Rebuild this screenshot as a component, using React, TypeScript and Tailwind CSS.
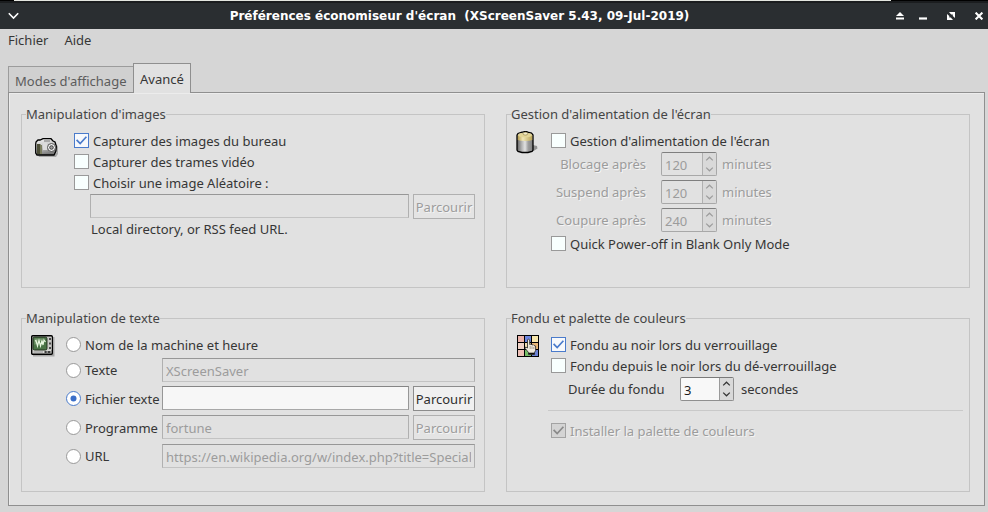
import React, { useId, useState } from "react";

const etched = "[text-shadow:1px_1px_0_#f4f4f4]";

function CheckBox({ label, defaultChecked, disabled }: { label: string; defaultChecked?: boolean; disabled?: boolean }) {
  return (
    <label className={`flex h-[21px] items-center gap-1 ${disabled ? `text-[#9c9c9c] ${etched}` : ""}`}>
      <span className="grid h-[15px] w-[15px] shrink-0">
        <input
          type="checkbox"
          defaultChecked={defaultChecked}
          disabled={disabled}
          className="peer h-[15px] w-[15px] appearance-none border border-[#999999] bg-[#f8fffe] [grid-area:1/1] checked:border-[#4a7bcb] checked:bg-[#f7f9fc] disabled:border-[#a3a3a3] disabled:bg-[#d4d4d4]"
        />
        <svg
          viewBox="0 0 15 15"
          className="pointer-events-none invisible h-[15px] w-[15px] text-[#4a7bcb] [grid-area:1/1] peer-checked:visible peer-disabled:text-[#8a8a8a]"
          fill="none"
          stroke="currentColor"
          strokeWidth="1.7"
        >
          <path d="M2.6 6.8 L6.2 10.6 L12.4 3.8" />
        </svg>
      </span>
      <span className="whitespace-nowrap">{label}</span>
    </label>
  );
}

function Radio({ label, checked, onChange }: { label: string; checked: boolean; onChange: () => void }) {
  return (
    <label className="flex h-[21px] items-center gap-1">
      <span className="grid h-[15px] w-[15px] shrink-0">
        <input
          type="radio"
          name="text-source"
          checked={checked}
          onChange={onChange}
          className="peer h-[15px] w-[15px] appearance-none rounded-full border border-[#999999] bg-white [grid-area:1/1] checked:border-[#4a7bcb]"
        />
        <svg viewBox="0 0 15 15" className="pointer-events-none invisible h-[15px] w-[15px] [grid-area:1/1] peer-checked:visible">
          <circle cx="7.5" cy="7.5" r="3" fill="#3b6fc9" />
        </svg>
      </span>
      <span className="whitespace-nowrap">{label}</span>
    </label>
  );
}

function Entry({ label, value, disabled, className = "" }: { label: string; value?: string; disabled?: boolean; className?: string }) {
  return (
    <input
      type="text"
      aria-label={label}
      defaultValue={value}
      disabled={disabled}
      className={`h-6 min-w-0 self-start border px-[3px] pt-px ${
        disabled
          ? "border-[#b0b0b0] border-t-[#979797] border-b-[#c3c3c3] bg-[#e1e1e1] text-[#9c9c9c]"
          : "border-[#979797] border-t-[#858585] border-b-[#a8a8a8] bg-[#f7f7f7] text-[#1c1c1c]"
      } ${className}`}
    />
  );
}

function Browse({ disabled }: { disabled?: boolean }) {
  return (
    <button
      type="button"
      disabled={disabled}
      className={`h-[25px] w-[62px] border ${
        disabled ? `border-[#b0b0b0] bg-[#e4e4e4] text-[#9c9c9c] ${etched}` : "border-[#8c8c8c] bg-[#f0f0f0] text-[#2e2e2e]"
      }`}
    >
      Parcourir
    </button>
  );
}

function Spin({ id, value, disabled }: { id: string; value: number; disabled?: boolean }) {
  const [n, setN] = useState(value);
  return (
    <span
      className={`flex h-6 rounded-[2px] border ${
        disabled ? "border-[#a8a8a8] border-t-[#7f7f7f] bg-[#e1e1e1] text-[#9c9c9c]" : "border-[#8f8f8f] border-t-[#7a7a7a] bg-[#f8f8f8] text-[#1c1c1c]"
      }`}
    >
      <input
        id={id}
        type="number"
        value={n}
        disabled={disabled}
        onChange={(e) => setN(Number(e.target.value))}
        className={`h-full pt-[2px] pl-[3px] [appearance:textfield] [&::-webkit-inner-spin-button]:appearance-none ${disabled ? "w-10" : "w-[38px]"}`}
      />
      <span className={`flex w-[14px] flex-col border-l bg-[#d9d9d9] ${disabled ? "border-[#b0b0b0] text-[#9c9c9c]" : "border-[#9a9a9a] text-[#333333]"}`}>
        <button type="button" aria-label="Augmenter" disabled={disabled} onClick={() => setN(n + 1)} className="grid flex-1 place-items-center">
          <svg width="9" height="5" viewBox="0 0 9 5" fill="none" stroke="currentColor" strokeWidth="1.2">
            <path d="M1.2 4.4 L4.5 1.2 L7.8 4.4" />
          </svg>
        </button>
        <button type="button" aria-label="Diminuer" disabled={disabled} onClick={() => setN(n - 1)} className="grid flex-1 place-items-center">
          <svg width="9" height="5" viewBox="0 0 9 5" fill="none" stroke="currentColor" strokeWidth="1.2">
            <path d="M1.2 0.6 L4.5 3.8 L7.8 0.6" />
          </svg>
        </button>
      </span>
    </span>
  );
}

function Group({ title, children }: { title: string; children: React.ReactNode }) {
  return (
    <fieldset className="min-w-0 border border-[#c4c4c4] px-1 pb-1">
      <legend className="h-5 leading-5 text-[#454545]">{title}</legend>
      {children}
    </fieldset>
  );
}

function CameraIcon() {
  return (
    <svg width="24" height="24" viewBox="0 0 24 24" className="shrink-0">
      <defs>
        <linearGradient id="cam" x1="0" y1="0" x2="0.3" y2="1">
          <stop offset="0" stopColor="#f4f4f4" />
          <stop offset="0.6" stopColor="#c2c2c2" />
          <stop offset="1" stopColor="#7b7b7b" />
        </linearGradient>
      </defs>
      <path d="M4 19 H20 L23 16 V9 L24 11 V18 L22 21 H5z" fill="#000" opacity="0.25" />
      <path d="M2 6 L4 4 H6 L9 2.7 H17 L19 5 L21 6 L22.3 10 L22 15 L20 19 H3 L1.7 17 V8z" fill="url(#cam)" stroke="#000" strokeWidth="1.3" />
      <path d="M3 8 H6.5 V18 H3z" fill="#4d4f38" />
      <path d="M6 9 H8 V18 H6z" fill="#7c7e60" />
      <path d="M10 4 H16 V6 H10z" fill="#a9a9a9" />
      <path d="M9 7 H13 V14 H9z" fill="#dcdcdc" />
      <circle cx="17.5" cy="11.5" r="4" fill="#f2f2f2" stroke="#555" strokeWidth="1" />
      <circle cx="17.5" cy="11.5" r="1.8" fill="#9e9e9e" stroke="#333" strokeWidth="0.9" />
    </svg>
  );
}

function BatteryIcon() {
  return (
    <svg width="24" height="24" viewBox="0 0 24 24" className="shrink-0">
      <defs>
        <linearGradient id="bat">
          <stop offset="0" stopColor="#5f5f5f" />
          <stop offset="0.3" stopColor="#b4b4b4" />
          <stop offset="0.5" stopColor="#e2e2e2" />
          <stop offset="0.7" stopColor="#9d9d9d" />
          <stop offset="1" stopColor="#7d7d7d" />
        </linearGradient>
        <linearGradient id="cap">
          <stop offset="0" stopColor="#b79f50" />
          <stop offset="0.35" stopColor="#f1e7b8" />
          <stop offset="1" stopColor="#b9a355" />
        </linearGradient>
      </defs>
      <path d="M17 14 L21 15 L21.5 17.5 L16 21z" fill="#000" opacity="0.35" />
      <path
        d="M1 4 L2 2.5 L6 1.2 H7.5 L8 0.7 H11 L11.5 1.2 L15.5 2.2 L17 4 V19 L16 20.5 L12 21.5 H6 L2 20.5 L1 19z"
        fill="url(#bat)"
        stroke="#000"
        strokeWidth="1.3"
      />
      <path d="M1.8 4 H16.3 V9 Q14 10 9 10 Q4 10 1.8 9z" fill="url(#cap)" />
      <ellipse cx="9" cy="4" rx="7" ry="2.3" fill="#e3d597" />
      <ellipse cx="9.4" cy="2.7" rx="2.4" ry="1.4" fill="#f4eed0" stroke="#8d7c3c" strokeWidth="0.6" />
    </svg>
  );
}

function ScopeIcon() {
  return (
    <svg width="24" height="24" viewBox="0 0 24 24" className="shrink-0">
      <path d="M2 2 H23.5 V21.5 H2z" fill="#000" opacity="0.25" />
      <rect x="0.7" y="0.7" width="20.6" height="18.6" rx="1" fill="#d9d9d5" stroke="#000" strokeWidth="1.4" />
      <rect x="2" y="2" width="14" height="13" rx="1.5" fill="#4a7446" stroke="#22301f" />
      <path d="M3.5 3.5 H14 L3.5 10z" fill="#9db892" opacity="0.55" />
      <path d="M4 6 L5 5.5 L6.5 11 L8 5.5 L9.5 11 L11 5.5 L12 10 L13 5 L14.5 7" fill="none" stroke="#e8f7e0" strokeWidth="1.2" />
      <path d="M17 2 H20.5 V15 H17z" fill="#c9c9c6" />
      <path d="M18 3 H20 V5 H18z M18 7.5 H20 V9.5 H18z M18 12 H20 V14 H18z" fill="#4a4a4a" />
      <path d="M2.5 17 H12" stroke="#a8a8a8" strokeWidth="1.5" />
      <path d="M13.5 17 H19.5" stroke="#222" strokeWidth="1.7" />
      <path d="M15.5 17 H17" stroke="#e4e4e4" strokeWidth="1" />
    </svg>
  );
}

function PaletteIcon() {
  return (
    <svg width="22" height="22" viewBox="0 0 22 22" className="shrink-0">
      <rect width="22" height="22" fill="#000" />
      <path d="M1 1h6v6H1z" fill="#ecb3aa" />
      <path d="M8 1h6v6H8z" fill="#6d86de" />
      <path d="M15 1h6v6h-6z" fill="#f6e6ac" />
      <path d="M1 8h6v6H1z" fill="#f0d2c6" />
      <path d="M8 8h6v6H8z" fill="#f2ddb0" />
      <path d="M15 8h6v6h-6z" fill="#e8b878" />
      <path d="M1 15h6v6H1z" fill="#eec0b6" />
      <path d="M8 15h6v6H8z" fill="#74bb66" />
      <path d="M15 15h6v6h-6z" fill="#6a82d4" />
      <path
        d="M10.5 5 L11.5 4 L12.7 5 V9.5 L14 9 L15 10 L16.2 9.6 L17.2 10.6 L18.6 11 V15.5 L17.5 17.5 V19.5 H11.5 V17.5 L8.2 13.4 L8.7 12 L10.5 13z"
        fill="#efe9dc"
        stroke="#222"
        strokeWidth="0.8"
      />
      <path d="M13.2 11 V14 M15 11.4 V14 M16.8 12 V14" stroke="#8c8675" strokeWidth="0.7" />
      <path d="M11.5 18.5 H17.5" stroke="#111" strokeWidth="1.6" />
    </svg>
  );
}

function TitleButton({ label, children }: { label: string; children: React.ReactNode }) {
  return (
    <button type="button" aria-label={label} className="grid h-[14px] w-[14px] shrink-0 place-items-center text-white">
      {children}
    </button>
  );
}

function DelayRow({ label, value }: { label: string; value: number }) {
  const id = useId();
  return (
    <div className={`flex items-center text-[#9c9c9c] ${etched}`}>
      <label htmlFor={id} className="mr-[15px] w-[95px] text-right whitespace-nowrap">
        {label}
      </label>
      <Spin id={id} value={value} disabled />
      <span className="ml-[5px]">minutes</span>
    </div>
  );
}

export default function App() {
  const [source, setSource] = useState("file");
  const fadeId = useId();
  return (
    <div className="flex min-h-screen flex-col bg-[#d6d6d6] font-['Noto_Sans',sans-serif] text-[13px] leading-5 text-[#363636]">
      <div className="flex h-px bg-black">
        <span className="w-[14px]" />
        <span className="flex-1 bg-[#e4e6e0]" />
        <span className="w-[97px]" />
      </div>
      <header className="flex h-7 items-center border-t-2 border-[#1b1d1f] bg-[#2a2e31] pr-[2px] pl-[6px]">
        <TitleButton label="Menu de la fenêtre">
          <svg width="11" height="8" viewBox="0 0 11 8" fill="none" stroke="currentColor" strokeWidth="1.6">
            <path d="M0.8 1.2 L5.5 6 L10.2 1.2" />
          </svg>
        </TitleButton>
        <h1 className="flex-1 pl-[6px] text-center font-['DejaVu_Sans',sans-serif] text-[12px] font-bold whitespace-pre text-white">
          {"Préférences économiseur d'écran  (XScreenSaver 5.43, 09-Jul-2019)"}
        </h1>
        <div className="flex gap-[14px]">
          <div className="flex gap-[9px]">
            <TitleButton label="Enrouler">
              <svg width="8" height="8" viewBox="0 0 8 8" fill="currentColor">
                <path d="M4 0 L8 4 H0z M0 5.4 H8 V7.4 H0z" />
              </svg>
            </TitleButton>
            <TitleButton label="Réduire">
              <svg width="8" height="8" viewBox="0 0 8 8" fill="currentColor">
                <path d="M0 5.4 H8 V7.6 H0z" />
              </svg>
            </TitleButton>
          </div>
          <TitleButton label="Agrandir">
            <svg width="8" height="8" viewBox="0 0 8 8" fill="currentColor">
              <path d="M2 0 H8 V6 L5.8 3.9 V2.4 H4.2z M0 2 L2.3 4.1 V5.6 H3.8 L6 8 H0z" />
            </svg>
          </TitleButton>
          <TitleButton label="Fermer">
            <svg width="8" height="8" viewBox="0 0 8 8" fill="none" stroke="currentColor" strokeWidth="2.1">
              <path d="M0.6 0.6 L7.4 7.4 M7.4 0.6 L0.6 7.4" />
            </svg>
          </TitleButton>
        </div>
      </header>

      <nav className="flex h-[22px] items-center gap-4 px-2">
        <button type="button">Fichier</button>
        <button type="button">Aide</button>
      </nav>

      <main className="flex flex-1 flex-col pt-3 pr-[3px] pb-[6px] pl-2">
        <div role="tablist" className="flex items-end">
          <button
            type="button"
            role="tab"
            aria-selected="false"
            className="h-[26px] min-w-[125px] border border-r-0 border-b-0 border-[#9c9c9c] bg-[#d0d0d0] px-[6px] pt-[2px] text-left text-[#5c5c5c]"
          >
            Modes d'affichage
          </button>
          <button type="button" role="tab" aria-selected="true" className="z-10 -mb-px h-[30px] border border-b-0 border-[#8f8f8f] bg-[#e1e1e1] px-[6px]">
            Avancé
          </button>
        </div>

        <div
          role="tabpanel"
          className="grid flex-1 grid-cols-2 grid-rows-2 gap-x-[21px] gap-y-5 border border-[#8f8f8f] bg-[#e1e1e1] pt-[11px] pr-[14px] pb-[13px] pl-3 shadow-[inset_1px_1px_0_#ececec]"
        >
          <Group title="Manipulation d'images">
            <div className="flex gap-4 pt-[6px] pr-[5px] pl-2">
              <div className="pt-[6px]">
                <CameraIcon />
              </div>
              <div className="flex min-w-0 flex-1 flex-col">
                <CheckBox label="Capturer des images du bureau" defaultChecked />
                <CheckBox label="Capturer des trames vidéo" />
                <CheckBox label="Choisir une image Aléatoire :" />
                <div className="flex gap-1 pt-px pl-4">
                  <Entry label="Dossier ou flux d'images" disabled className="flex-1" />
                  <Browse disabled />
                </div>
                <p className="pl-[17px]">Local directory, or RSS feed URL.</p>
              </div>
            </div>
          </Group>

          <Group title="Gestion d'alimentation de l'écran">
            <div className="flex gap-[11px] pt-[6px] pl-[5px]">
              <div className="pt-px">
                <BatteryIcon />
              </div>
              <div className="flex flex-col">
                <CheckBox label="Gestion d'alimentation de l'écran" />
                <div className="flex flex-col gap-1 pt-px pb-px">
                  <DelayRow label="Blocage après" value={120} />
                  <DelayRow label="Suspend après" value={120} />
                  <DelayRow label="Coupure après" value={240} />
                </div>
                <CheckBox label="Quick Power-off in Blank Only Mode" />
              </div>
            </div>
          </Group>

          <Group title="Manipulation de texte">
            <div className="flex gap-[11px] pt-[6px] pr-[5px] pl-[5px]">
              <div className="pt-px">
                <ScopeIcon />
              </div>
              <div className="flex min-w-0 flex-1 flex-col">
                <Radio label="Nom de la machine et heure" checked={source === "host"} onChange={() => setSource("host")} />
                <div className="grid grid-cols-[96px_minmax(0,1fr)_62px] items-center gap-y-1 pt-[3px]">
                  <Radio label="Texte" checked={source === "text"} onChange={() => setSource("text")} />
                  <Entry label="Texte à afficher" value="XScreenSaver" disabled className="col-span-2" />
                  <Radio label="Fichier texte" checked={source === "file"} onChange={() => setSource("file")} />
                  <Entry label="Chemin du fichier" className="mr-1" />
                  <Browse />
                  <Radio label="Programme" checked={source === "program"} onChange={() => setSource("program")} />
                  <Entry label="Commande" value="fortune" disabled className="mr-1" />
                  <Browse disabled />
                  <Radio label="URL" checked={source === "url"} onChange={() => setSource("url")} />
                  <Entry label="Adresse URL" value="https://en.wikipedia.org/w/index.php?title=Special:NewPages&feed=rss" disabled className="col-span-2" />
                </div>
              </div>
            </div>
          </Group>

          <Group title="Fondu et palette de couleurs">
            <div className="flex gap-3 pt-[6px] pl-[6px]">
              <div className="pt-px">
                <PaletteIcon />
              </div>
              <div className="flex min-w-0 flex-1 flex-col pr-[2px]">
                <CheckBox label="Fondu au noir lors du verrouillage" defaultChecked />
                <CheckBox label="Fondu depuis le noir lors du dé-verrouillage" />
                <div className="flex items-center pt-px pl-[17px]">
                  <label htmlFor={fadeId} className="w-28">
                    Durée du fondu
                  </label>
                  <Spin id={fadeId} value={3} />
                  <span className="ml-[7px]">secondes</span>
                </div>
                <hr className="my-[9px] -ml-[3px] border-[#c9c9c9]" />
                <CheckBox label="Installer la palette de couleurs" defaultChecked disabled />
              </div>
            </div>
          </Group>
        </div>
      </main>
    </div>
  );
}
